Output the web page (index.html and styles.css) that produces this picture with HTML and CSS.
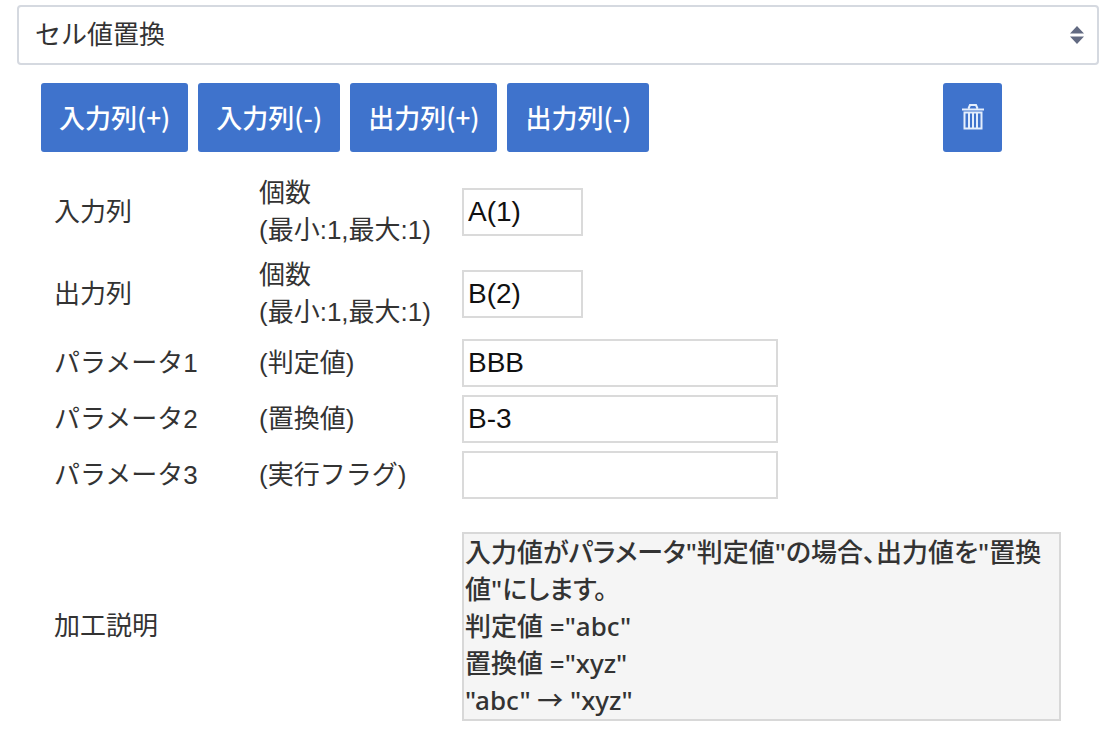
FILE: index.html
```
<!DOCTYPE html>
<html lang="ja">

<head>
    <meta charset="UTF-8" />
    <meta name="viewport" content="width=device-width, initial-scale=1.0" />
    <title>セル値置換</title>
    <link rel="stylesheet" href="styles.css">
</head>

<body>
    <div class="select-box">
        <select id="process" aria-label="加工">
            <option>セル値置換</option>
        </select>
        <svg class="select-arrow" viewBox="0 0 14 18" aria-hidden="true">
            <path d="M0 7.5 7 0l7 7.5zM0 10.5h14L7 18z" />
        </svg>
    </div>

    <div class="toolbar">
        <div class="buttons">
            <button type="button">入力列(+)</button>
            <button type="button">入力列(-)</button>
            <button type="button">出力列(+)</button>
            <button type="button">出力列(-)</button>
        </div>
        <button type="button" class="delete" aria-label="削除">
            <svg viewBox="0 0 22 26" aria-hidden="true">
                <path d="M6.500 4.500 8 1h6l1.500 3.500M0 5.500h22M2.500 8.500h17v16h-17zM7 8v17M11 8v17M15 8v17" />
            </svg>
        </button>
    </div>

    <table>
        <tr>
            <th><label for="input-col">入力列</label></th>
            <td class="note">個数<br />(最小:1,最大:1)</td>
            <td><input type="text" id="input-col" class="short" value="A(1)" /></td>
        </tr>
        <tr>
            <th><label for="output-col">出力列</label></th>
            <td class="note">個数<br />(最小:1,最大:1)</td>
            <td><input type="text" id="output-col" class="short" value="B(2)" /></td>
        </tr>
        <tr>
            <th><label for="param1">パラメータ1</label></th>
            <td class="note">(判定値)</td>
            <td><input type="text" id="param1" value="BBB" /></td>
        </tr>
        <tr>
            <th><label for="param2">パラメータ2</label></th>
            <td class="note">(置換値)</td>
            <td><input type="text" id="param2" value="B-3" /></td>
        </tr>
        <tr>
            <th><label for="param3">パラメータ3</label></th>
            <td class="note">(実行フラグ)</td>
            <td><input type="text" id="param3" /></td>
        </tr>
    </table>

    <table class="description">
        <tr>
            <th><label for="description">加工説明</label></th>
            <td><textarea id="description" rows="5" readonly>入力値がパラメータ"判定値"の場合、出力値を"置換値"にします。
判定値 ="abc"
置換値 ="xyz"
"abc" → "xyz"</textarea></td>
        </tr>
    </table>
</body>

</html>
```
FILE: styles.css
```
* {
    box-sizing: border-box;
}

body {
    margin: 0;
    padding: 5px 9px 10px 17px;
    background: #fff;
    color: #333;
    font-family: "Liberation Sans", "Noto Sans CJK JP", sans-serif;
    font-size: 26px;
    line-height: 37px;
}

select,
input,
button,
textarea {
    font: inherit;
    color: inherit;
}

/* セレクトボックス */
.select-box {
    position: relative;
}

select {
    display: block;
    width: 100%;
    height: 60px;
    padding: 0 48px 0 16px;
    border: 2px solid #d5d9e0;
    border-radius: 4px;
    background: #fff;
    appearance: none;
}

.select-arrow {
    position: absolute;
    top: 21px;
    right: 15px;
    width: 14px;
    height: 18px;
    fill: #626a82;
    pointer-events: none;
}

/* ボタン */
.toolbar {
    display: flex;
    justify-content: space-between;
    margin: 18px 97px 0 24px;
}

.buttons {
    display: flex;
    gap: 10px;
}

button {
    height: 69px;
    padding: 0 18px 2px;
    border: none;
    border-radius: 3px;
    background: #3f73cc;
    color: #fff;
    font-family: "Noto Sans CJK JP", sans-serif;
    font-weight: 500;
    cursor: pointer;
}

.delete {
    display: flex;
    align-items: center;
    justify-content: center;
    width: 59px;
}

.delete svg {
    flex: none;
    width: 22px;
    height: 26px;
    fill: none;
    stroke: #e4eefc;
    stroke-width: 2;
}

/* 入力フォーム */
table {
    width: 100%;
    margin-top: 19px;
    border-collapse: collapse;
}

th,
td {
    padding: 4px 0;
    vertical-align: middle;
}

th {
    width: 242px;
    padding-left: 37px;
    font-weight: normal;
    text-align: left;
}

.note {
    width: 203px;
}

input {
    display: block;
    width: 316px;
    height: 48px;
    padding: 0 4px;
    border: 2px solid #dadada;
    background: #fff;
    color: #111;
    font-size: 28px;
}

.short {
    width: 121px;
}

/* 加工説明 */
.description {
    margin-top: 25px;
}

.description th {
    width: 445px;
}

.description td {
    padding-right: 38px;
}

textarea {
    display: block;
    width: 100%;
    padding: 0 1px;
    border: 2px solid #d8d8d8;
    background: #f5f5f5;
    font-family: "Noto Sans", "Noto Sans CJK JP", sans-serif;
    font-weight: 500;
    font-feature-settings: "palt";
    overflow: hidden;
    resize: none;
}
```
